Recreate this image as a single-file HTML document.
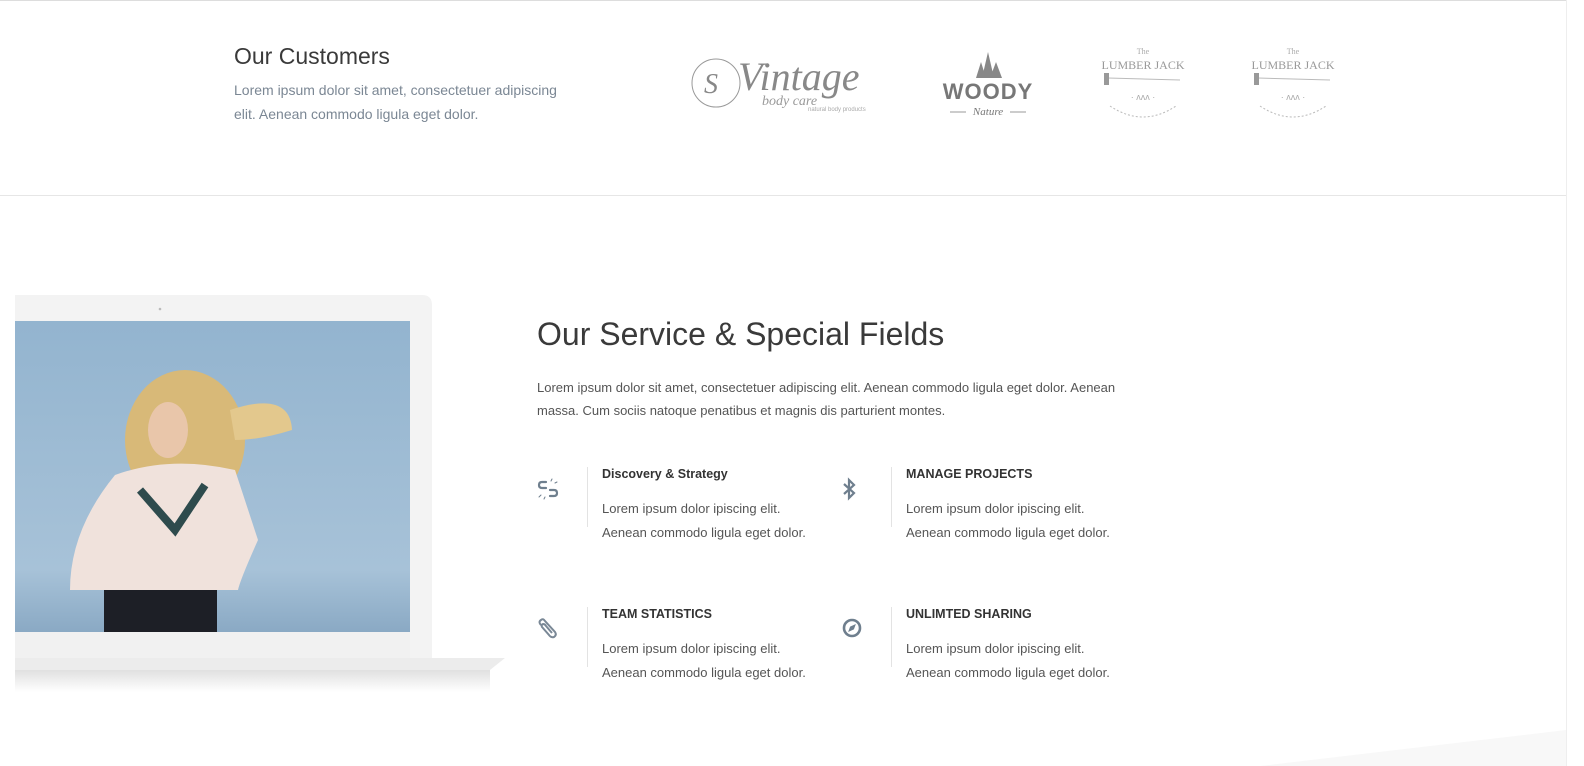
<!DOCTYPE html>
<html><head><meta charset="utf-8"><style>
*{margin:0;padding:0;box-sizing:border-box}
body{width:1584px;height:766px;overflow:hidden;background:#fff;font-family:"Liberation Sans",sans-serif;position:relative}
.topline{position:absolute;left:0;top:0;width:1566px;height:1px;background:#ddd}
.sep{position:absolute;left:0;top:195px;width:1566px;height:1px;background:#e6e6e6}
.vr{position:absolute;left:1566px;top:0;width:1px;height:766px;background:#eee}
h2.cust{position:absolute;left:234px;top:43px;font-weight:normal;font-size:23px;color:#3a3a3a}
p.cust{position:absolute;left:234px;top:78px;width:345px;font-size:14px;line-height:24px;color:#7b8794}
h1{position:absolute;left:537px;top:316px;font-weight:normal;font-size:32px;color:#3a3a3a}
p.lead{position:absolute;left:537px;top:376px;width:620px;font-size:13px;line-height:23px;color:#555}
.item{position:absolute;width:260px}
.item .bar{position:absolute;left:50px;top:0;width:1px;height:60px;background:#e3e3e3}
.item h4{position:absolute;left:65px;top:0;font-size:12.5px;font-weight:bold;color:#333;white-space:nowrap}
.item p{position:absolute;left:65px;top:30px;font-size:13px;line-height:24px;color:#555;white-space:nowrap}
.item svg{position:absolute;left:0;top:10px}
</style></head><body>
<div class="topline"></div><div class="sep"></div><div class="vr"></div>
<h2 class="cust">Our Customers</h2>
<p class="cust">Lorem ipsum dolor sit amet, consectetuer adipiscing elit. Aenean commodo ligula eget dolor.</p>

<svg style="position:absolute;left:690px;top:45px" width="190" height="75">
<circle cx="26" cy="38" r="24" fill="none" stroke="#999" stroke-width="1"/>
<text x="14" y="48" font-family="Liberation Serif" font-style="italic" font-size="28" fill="#888">S</text>
<text x="48" y="45" font-family="Liberation Serif" font-style="italic" font-size="40" fill="#888">Vintage</text>
<text x="72" y="60" font-family="Liberation Serif" font-style="italic" font-size="14" fill="#999">body care</text>
<text x="118" y="66" font-size="6" fill="#aaa">natural body products</text>
</svg>
<svg style="position:absolute;left:936px;top:48px" width="104" height="72">
<polygon points="40,30 45,14 50,30" fill="#888"/><polygon points="46,30 52,4 58,30" fill="#888"/><polygon points="54,30 60,14 66,30" fill="#888"/>
<text x="52" y="51" text-anchor="middle" font-weight="bold" font-size="22" fill="#777" letter-spacing="1">WOODY</text>
<text x="52" y="67" text-anchor="middle" font-family="Liberation Serif" font-style="italic" font-size="11" fill="#777">Nature</text>
<line x1="14" y1="64" x2="30" y2="64" stroke="#999"/><line x1="74" y1="64" x2="90" y2="64" stroke="#999"/>
</svg>
<svg style="position:absolute;left:1098px;top:42px" width="90" height="82">
<text x="45" y="12" text-anchor="middle" font-family="Liberation Serif" font-size="8" fill="#aaa">The</text>
<text x="45" y="27" text-anchor="middle" font-family="Liberation Serif" font-size="12" fill="#999">LUMBER JACK</text>
<line x1="10" y1="36" x2="82" y2="38" stroke="#bbb"/><rect x="6" y="31" width="5" height="12" fill="#999"/>
<text x="45" y="58" text-anchor="middle" font-size="9" fill="#aaa">· ʌʌʌ ·</text>
<path d="M12 64 Q45 86 78 64" fill="none" stroke="#bbb" stroke-dasharray="2 2"/>
</svg>
<svg style="position:absolute;left:1248px;top:42px" width="90" height="82">
<text x="45" y="12" text-anchor="middle" font-family="Liberation Serif" font-size="8" fill="#aaa">The</text>
<text x="45" y="27" text-anchor="middle" font-family="Liberation Serif" font-size="12" fill="#999">LUMBER JACK</text>
<line x1="10" y1="36" x2="82" y2="38" stroke="#bbb"/><rect x="6" y="31" width="5" height="12" fill="#999"/>
<text x="45" y="58" text-anchor="middle" font-size="9" fill="#aaa">· ʌʌʌ ·</text>
<path d="M12 64 Q45 86 78 64" fill="none" stroke="#bbb" stroke-dasharray="2 2"/>
</svg>

<svg style="position:absolute;left:0;top:290px" width="520" height="420">
<defs>
<linearGradient id="sky" x1="0" y1="0" x2="0" y2="1"><stop offset="0" stop-color="#93b4cf"/><stop offset="0.8" stop-color="#a7c2d8"/><stop offset="1" stop-color="#8aa9c4"/></linearGradient>
<linearGradient id="sh" x1="0" y1="0" x2="0" y2="1"><stop offset="0" stop-color="#e0e0e0"/><stop offset="1" stop-color="#fff"/></linearGradient>
</defs>
<path d="M15 5 H422 Q432 5 432 15 V370 H15 Z" fill="#f3f3f3"/>
<circle cx="160" cy="19" r="1.3" fill="#bbb"/>
<rect x="15" y="31" width="395" height="311" fill="url(#sky)"/>
<ellipse cx="185" cy="150" rx="60" ry="70" fill="#d8b978"/>
<path d="M230 120 Q290 100 292 140 Q260 150 235 150Z" fill="#e3c88d"/>
<ellipse cx="168" cy="140" rx="20" ry="28" fill="#e9c6aa"/>
<path d="M115 185 Q170 165 235 180 L258 250 Q240 290 238 300 L70 300 Q70 240 115 185Z" fill="#f0e2dc"/>
<path d="M140 200 L175 240 L205 195" fill="none" stroke="#2e4b4d" stroke-width="8"/>
<rect x="104" y="300" width="113" height="42" fill="#1d1f26"/>
<path d="M15 342 H410 V368 H15Z" fill="#f1f1f1"/>
<path d="M15 368 H505 L490 380 H15Z" fill="#ececec"/>
<rect x="15" y="380" width="475" height="22" fill="url(#sh)"/>
</svg>

<h1>Our Service &amp; Special Fields</h1>
<p class="lead">Lorem ipsum dolor sit amet, consectetuer adipiscing elit. Aenean commodo ligula eget dolor. Aenean massa. Cum sociis natoque penatibus et magnis dis parturient montes.</p>

<div class="item" style="left:537px;top:467px"><div class="bar"></div>
<svg width="24" height="24" viewBox="0 0 24 24" fill="none" stroke="#6f7f8e" stroke-width="2.2" stroke-linecap="round"><path d="M9 5 H5 Q2 5 2 8 Q2 11 5 11 H9"/><path d="M13 19 H17 Q20 19 20 16 Q20 13 17 13 H13"/><path d="M14 4 L15 2 M18 6 L20 5 M4 18 L2 20 M8 20 L7 22" stroke-width="1"/></svg>
<h4>Discovery &amp; Strategy</h4><p>Lorem ipsum dolor ipiscing elit.<br>Aenean commodo ligula eget dolor.</p></div>

<div class="item" style="left:841px;top:467px"><div class="bar"></div>
<svg width="24" height="24" viewBox="0 0 24 24" fill="none" stroke="#6f7f8e" stroke-width="2.2"><path d="M3 7 L13 16 L8 21 V3 L13 8 L3 17"/></svg>
<h4>MANAGE PROJECTS</h4><p>Lorem ipsum dolor ipiscing elit.<br>Aenean commodo ligula eget dolor.</p></div>

<div class="item" style="left:537px;top:607px"><div class="bar"></div>
<svg width="24" height="24" viewBox="0 0 24 24" fill="none" stroke="#7a8896" stroke-width="2"><path d="M4 8 Q1 5 4 3 Q6 1 8 4 L18 15 Q20 18 17 20 Q14 21 12 18 L5 10 Q4 8 6 7 Q8 7 9 9 L15 16"/></svg>
<h4>TEAM STATISTICS</h4><p>Lorem ipsum dolor ipiscing elit.<br>Aenean commodo ligula eget dolor.</p></div>

<div class="item" style="left:841px;top:607px"><div class="bar"></div>
<svg width="24" height="24" viewBox="0 0 24 24" fill="none" stroke="#6f7f8e" stroke-width="2.6"><circle cx="11" cy="11" r="8"/><path d="M14 8 L9.5 10 L8 14 L12.5 12Z" fill="#6f7f8e" stroke-width="1"/></svg>
<h4>UNLIMTED SHARING</h4><p>Lorem ipsum dolor ipiscing elit.<br>Aenean commodo ligula eget dolor.</p></div>

<svg style="position:absolute;left:1260px;top:715px" width="306" height="51"><path d="M0 51 L306 15 V51Z" fill="#f8f8f8"/></svg>
</body></html>
